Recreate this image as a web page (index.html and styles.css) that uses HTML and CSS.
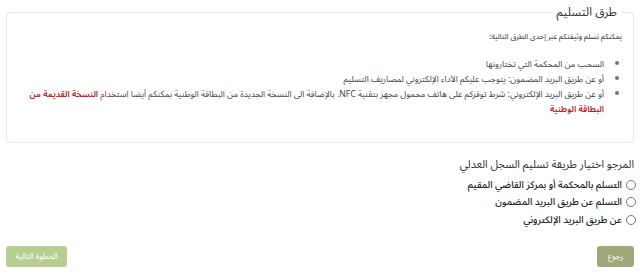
FILE: index.html
```html
<!DOCTYPE html>
<html lang="ar" dir="rtl">

<head>
  <meta charset="UTF-8">
  <title>طرق التسليم</title>
  <link rel="stylesheet" href="styles.css">
</head>

<body>
  <div class="page">
    <fieldset class="methods">
      <legend>طرق التسليم</legend>
      <p class="intro">يمكنكم تسلم وثيقتكم عبر إحدى الطرق التالية:</p>
      <ul class="list">
        <li>السحب من المحكمة التي تختارونها</li>
        <li>أو عن طريق البريد المضمون: يتوجب عليكم الأداء الإلكتروني لمصاريف التسليم</li>
        <li>أو عن طريق البريد الإلكتروني: شرط توفركم على هاتف محمول مجهز بتقنية NFC. بالإضافة الى النسخة الجديدة من البطاقة الوطنية بمكنكم أيضا استخدام <span class="warn">النسخة القديمة من البطاقة الوطنية</span></li>
      </ul>
    </fieldset>

    <section class="choice">
      <h2>المرجو اختيار طريقة تسليم السجل العدلي</h2>
      <label class="opt"><input type="radio" name="mode"> التسلم بالمحكمة أو بمركز القاضي المقيم</label>
      <label class="opt"><input type="radio" name="mode"> التسلم عن طريق البريد المضمون</label>
      <label class="opt"><input type="radio" name="mode"> عن طريق البريد الإلكتروني</label>
    </section>

    <div class="actions">
      <button class="btn back">رجوع</button>
      <button class="btn next" disabled>الخطوة التالية</button>
    </div>
  </div>
</body>

</html>
```

FILE: styles.css
```css
body {
  margin: 0;
  font-family: "Noto Sans Arabic", "DejaVu Sans", sans-serif;
  font-size: 7.5px;
  color: #333;
  background: #fff;
}

.page {
  padding: 0 6px 0 6px;
}

.methods {
  margin: 0;
  padding: 0 11px 0 11px;
  height: 143px;
  border: 1px solid #e6e6e6;
  border-radius: 4px;
  box-sizing: border-box;
}

.methods legend {
  font-size: 12px;
  padding: 0 5px;
  margin-right: 0;
  color: #333;
}

.intro {
  margin: 4px 0 12px;
}

.list {
  margin: 0;
  padding: 0 18px 0 0;
  font-size: 8.6px;
  color: #444;
  line-height: 15px;
}

.list li::marker {
  color: #777;
}

.warn {
  color: #c0171d;
  font-weight: 600;
}

.choice {
  padding: 14px 0 0 0;
}

.choice h2 {
  margin: 0 0 3px;
  font-size: 10.9px;
  line-height: 16px;
  font-weight: normal;
  color: #333;
}

.opt {
  display: flex;
  align-items: center;
  gap: 4px;
  height: 17.5px;
  font-size: 9.6px;
  line-height: 14px;
  font-weight: 500;
  color: #222;
}

.opt input {
  margin: 0 -2px 0 0;
  width: 10px;
  height: 10px;
}

.actions {
  display: flex;
  justify-content: space-between;
  padding: 17px 0 0 0;
}

.btn {
  border: none;
  border-radius: 3px;
  height: 21px;
  padding: 0;
  font-family: inherit;
  font-size: 8px;
  white-space: nowrap;
  color: #fff;
}

.back {
  width: 37px;
  background: #a2a679;
}

.next {
  width: 61px;
  background: #b6cf91;
}
```
